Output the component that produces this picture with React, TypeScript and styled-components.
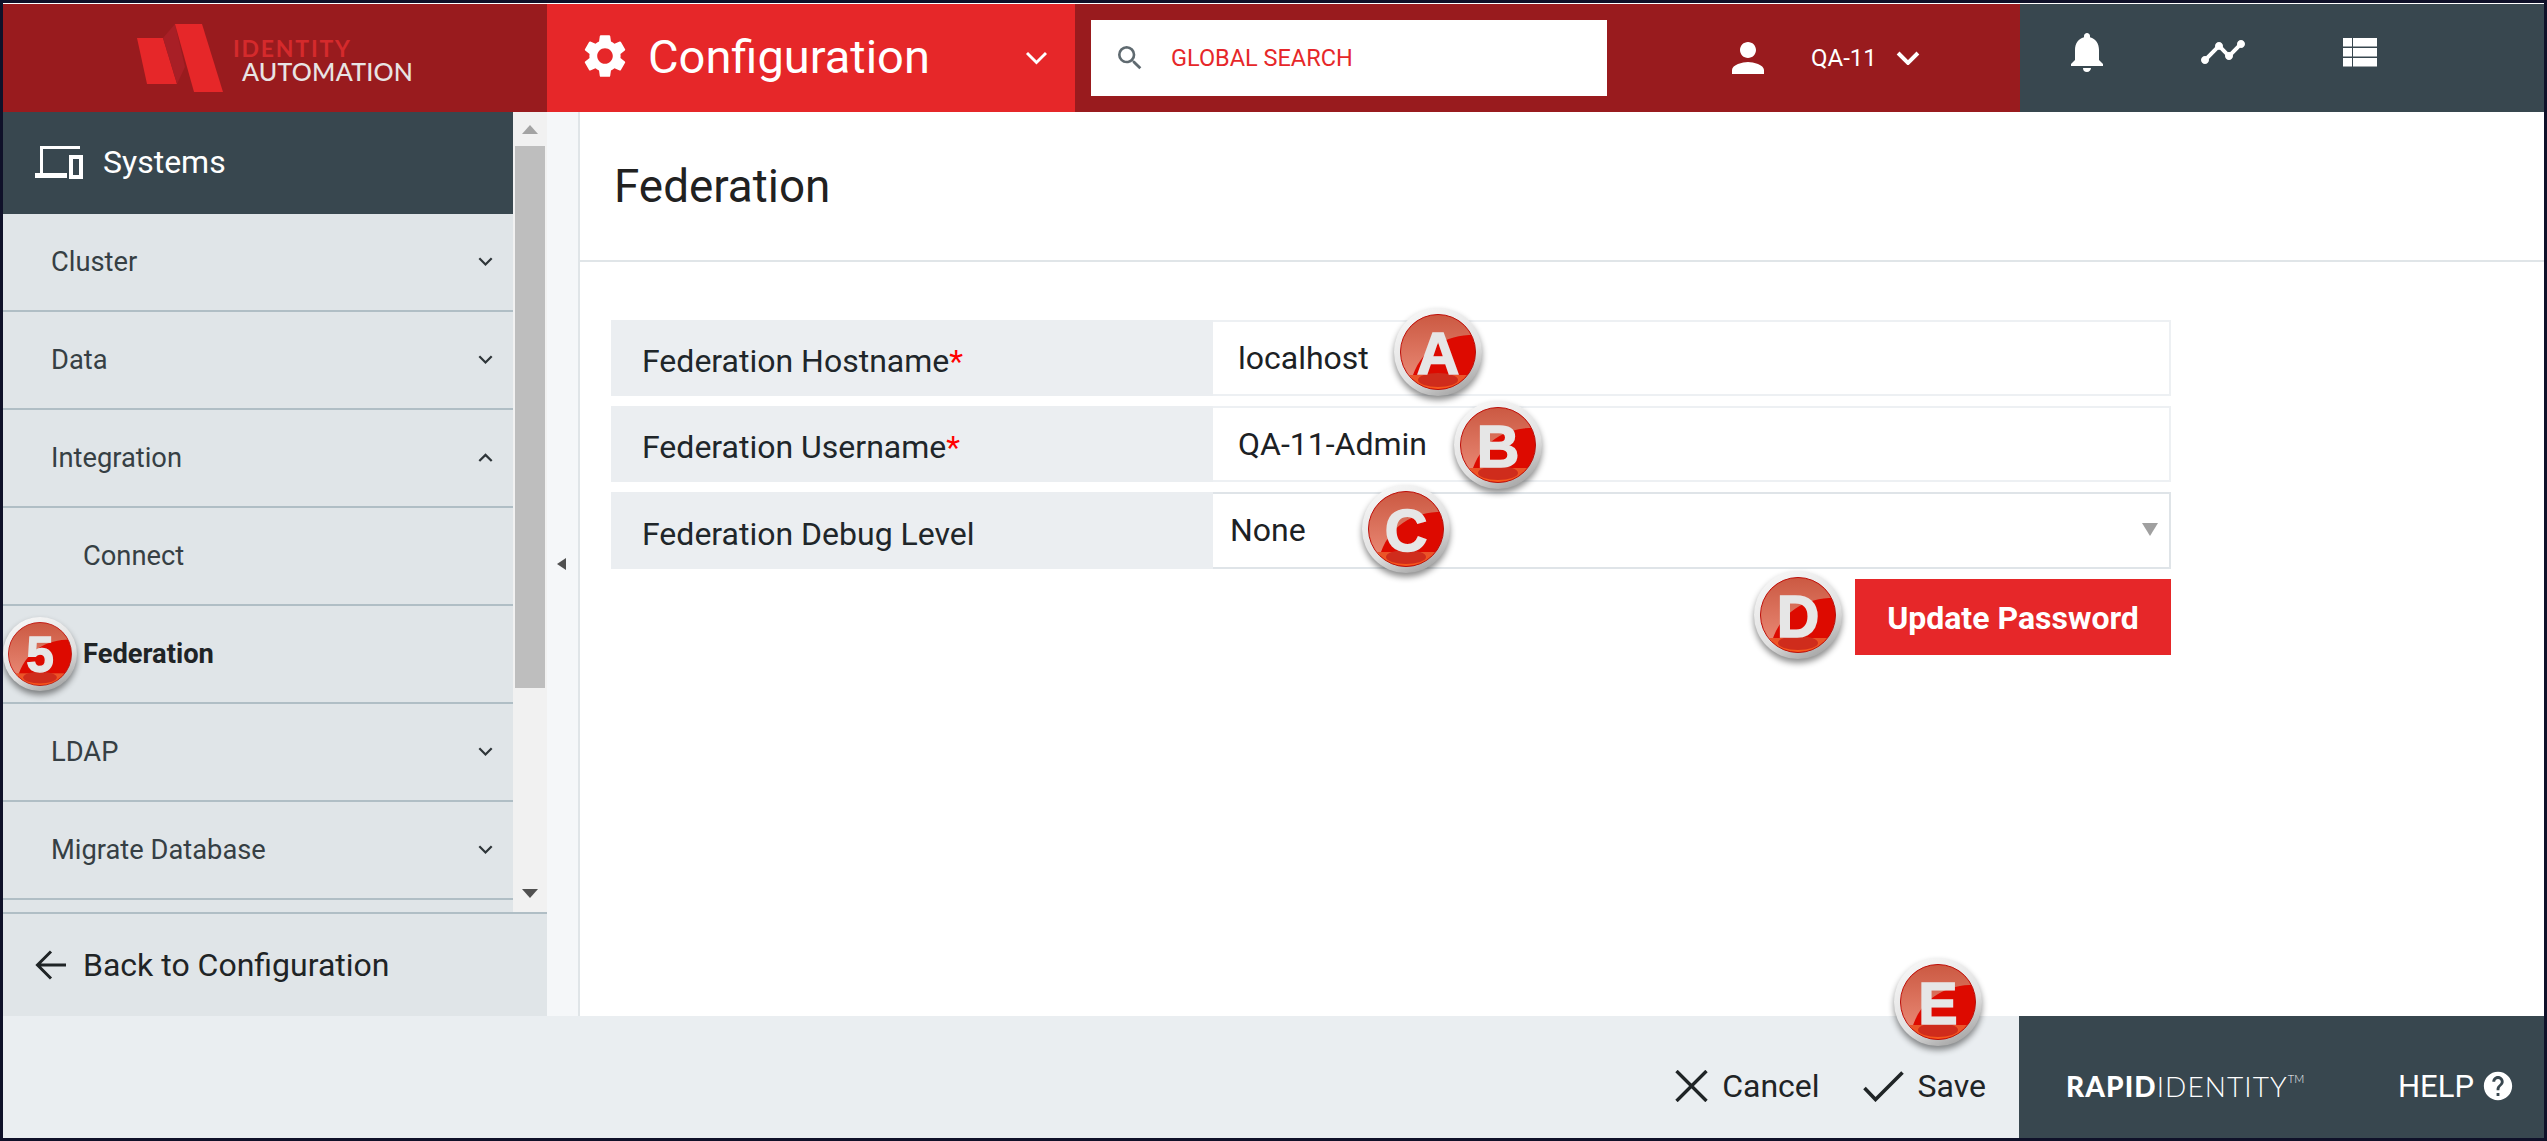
import React from "react";
import styled, { createGlobalStyle } from "styled-components";
import { MdHelp, MdNotifications, MdPerson, MdSearch, MdSettings, MdTimeline } from "react-icons/md";

const red = "#e62729";
const darkRed = "#991b1e";
const slate = "#38474f";

const GlobalStyle = createGlobalStyle`
	html, body {
		margin: 0;
		padding: 0;
		background: #fff;
		font-family: Roboto, "Liberation Sans", sans-serif;
	}
`;

const Frame = styled.div`
	position: relative;
	box-sizing: border-box;
	width: 2547px;
	height: 1141px;
	padding-top: 1px;
	border: 3px solid #0f1129;
	background: #fff;
	display: flex;
	flex-direction: column;
	overflow: hidden;
`;

const Header = styled.header`
	display: flex;
	flex: 0 0 108px;
	background: ${darkRed};
`;

const LogoCell = styled.div`
	flex: 0 0 544px;
	display: flex;
	align-items: flex-start;
	padding: 16px 0 0 134px;
	box-sizing: border-box;
`;

const ConfigCell = styled.div`
	flex: 0 0 528px;
	box-sizing: border-box;
	background: ${red};
	color: #fff;
	display: flex;
	align-items: center;
	padding: 0 27px 0 32px;
	font-size: 47px;
	svg.gear { margin-right: 17px; margin-top: -4px; }
`;

const ConfigLabel = styled.span`
	flex: 1;
	margin-top: -3px;
`;

const SearchBox = styled.div`
	flex: 0 0 516px;
	height: 76px;
	margin: 16px 0 0 16px;
	background: #fff;
	display: flex;
	align-items: center;
	padding-left: 23px;
	box-sizing: border-box;
	color: ${red};
	font-size: 23.5px;
	svg { color: #5f6a70; margin-right: 25px; }
`;

const UserBlock = styled.div`
	flex: 1;
	display: flex;
	align-items: center;
	color: #fff;
	font-size: 24px;
	padding: 0 0 0 117px;
	box-sizing: border-box;
`;

const UserName = styled.span`
	margin: 0 19px 0 39px;
`;

const ToolCell = styled.div`
	flex: 0 0 524px;
	box-sizing: border-box;
	background: ${slate};
	color: #fff;
	display: flex;
	align-items: flex-start;
	padding: 23px 0 0 43px;
`;

const ToolSlot = styled.div<{ $width: number }>`
	flex: 0 0 ${(p) => p.$width}px;
	display: flex;
	height: 50px;
	align-items: center;
`;

const Body = styled.div`
	flex: 1;
	display: flex;
	min-height: 0;
`;

const Sidebar = styled.aside`
	flex: 0 0 544px;
	display: flex;
	flex-direction: column;
`;

const SideTop = styled.div`
	flex: 0 0 800px;
	display: flex;
	min-height: 0;
`;

const SidePane = styled.div`
	flex: 0 0 510px;
	display: flex;
	flex-direction: column;
	background: #e0e5e8;
`;

const SideHead = styled.div`
	flex: 0 0 102px;
	background: ${slate};
	color: #fff;
	display: flex;
	align-items: center;
	padding: 0 0 2px 32px;
	box-sizing: border-box;
	font-size: 32px;
	svg { margin-right: 20px; }
`;

const NavRow = styled.div<{ $sub?: boolean; $active?: boolean }>`
	box-sizing: border-box;
	height: 98px;
	flex: 0 0 98px;
	border-bottom: 2px solid #b0bec5;
	display: flex;
	align-items: center;
	justify-content: space-between;
	padding: 0 20px 0 ${(p) => (p.$sub ? 80 : 48)}px;
	font-size: 27.3px;
	font-weight: ${(p) => (p.$active ? 700 : 400)};
	color: ${(p) => (p.$active ? "#1f2426" : "#363f44")};
`;

const Scrollbar = styled.div`
	flex: 0 0 34px;
	background: #f1f1f1;
	display: flex;
	flex-direction: column;
	align-items: center;
`;

const ScrollButton = styled.div<{ $down?: boolean }>`
	flex: 0 0 ${(p) => (p.$down ? "auto" : "34px")};
	margin-top: ${(p) => (p.$down ? "auto" : "0")};
	padding-bottom: ${(p) => (p.$down ? "14px" : "0")};
	display: flex;
	align-items: center;
	&::before {
		content: "";
		border-left: 8px solid transparent;
		border-right: 8px solid transparent;
		${(p) => (p.$down ? "border-top: 9px solid #505050;" : "border-bottom: 9px solid #a3a3a3;")}
	}
`;

const ScrollThumb = styled.div`
	flex: 0 0 542px;
	width: 30px;
	background: #bebebe;
`;

const BackLink = styled.div`
	flex: 1;
	border-top: 2px solid #b0bec5;
	background: #e0e5e8;
	display: flex;
	align-items: center;
	padding-left: 32px;
	font-size: 32px;
	color: #1f2426;
	svg { margin-right: 17px; }
`;

const CollapseStrip = styled.div`
	flex: 0 0 31px;
	background: #f5f7f9;
	border-right: 2px solid #e0e5e8;
	display: flex;
	align-items: center;
	justify-content: center;
	&::before {
		content: "";
		border-top: 6px solid transparent;
		border-bottom: 6px solid transparent;
		border-right: 9px solid #505050;
		margin-left: -2px;
	}
`;

const Content = styled.main`
	flex: 1;
	display: flex;
	flex-direction: column;
`;

const TitleBar = styled.div`
	flex: 0 0 148px;
	border-bottom: 2px solid #e0e5e8;
	display: flex;
	align-items: center;
	padding-left: 34px;
`;

const Title = styled.h1`
	margin: 0;
	font-size: 45.8px;
	font-weight: 400;
	color: #212121;
`;

const Form = styled.div`
	width: 1560px;
	margin: 58px 0 0 31px;
	display: flex;
	flex-direction: column;
	gap: 10px;
`;

const FieldRow = styled.div<{ $tall?: boolean }>`
	display: flex;
	height: ${(p) => (p.$tall ? 77 : 76)}px;
`;

const FieldLabel = styled.div`
	flex: 0 0 602px;
	box-sizing: border-box;
	background: #ebeef1;
	display: flex;
	align-items: center;
	padding: 6px 0 0 31px;
	font-size: 32px;
	color: #20262a;
`;

const Required = styled.span`
	color: #f00;
`;

const FieldValue = styled.div<{ $select?: boolean }>`
	flex: 1;
	box-sizing: border-box;
	background: #fff;
	border: 2px solid ${(p) => (p.$select ? "#dfe4e8" : "#edf0f3")};
	border-left: 0;
	display: flex;
	align-items: center;
	justify-content: space-between;
	padding: 0 11px ${(p) => (p.$select ? 2 : 0)}px ${(p) => (p.$select ? 17 : 25)}px;
	font-size: 32px;
	color: #1c2124;
`;

const SelectArrow = styled.span`
	border-left: 8px solid transparent;
	border-right: 8px solid transparent;
	border-top: 13px solid #a0a0a0;
`;

const ButtonRow = styled.div`
	display: flex;
	justify-content: flex-end;
`;

const RedButton = styled.button`
	width: 316px;
	height: 76px;
	border: 0;
	padding: 2px 0 0;
	background: ${red};
	color: #fff;
	font-family: Roboto, sans-serif;
	font-size: 32px;
	font-weight: 700;
`;

const Footer = styled.footer`
	flex: 0 0 122px;
	display: flex;
`;

const FooterActions = styled.div`
	flex: 1;
	background: #eaeef1;
	display: flex;
	align-items: center;
	justify-content: flex-end;
	padding: 18px 33px 0 0;
	font-size: 32px;
	color: #1f2426;
`;

const FooterAction = styled.div`
	display: flex;
	align-items: center;
	gap: 14px;
	margin-left: 43px;
`;

const Brand = styled.div`
	flex: 0 0 525px;
	box-sizing: border-box;
	background: ${slate};
	color: #fff;
	display: flex;
	align-items: center;
	padding: 18px 0 0 47px;
`;

const BrandMark = styled.div`
	flex: 0 0 332px;
	font-family: Lato, sans-serif;
	font-size: 28px;
	letter-spacing: 1.1px;
	font-weight: 300;
	b { font-weight: 900; }
	sup { font-size: 11px; vertical-align: 14px; line-height: 0; letter-spacing: 0; }
`;

const HelpLabel = styled.div`
	font-size: 31px;
	display: flex;
	align-items: center;
	gap: 7px;
`;

const BadgeWrap = styled.svg<{ $cx: number; $cy: number; $size: number }>`
	position: absolute;
	left: ${(p) => p.$cx - 3 - p.$size / 2}px;
	top: ${(p) => p.$cy - 3 - p.$size / 2}px;
	width: ${(p) => p.$size}px;
	height: ${(p) => p.$size}px;
	overflow: visible;
	filter: drop-shadow(0 4px 3px rgba(0, 0, 0, 0.45));
`;

const Chevron: React.FC<{ size: number; up?: boolean; stroke?: number; color?: string }> = ({ size, up, stroke = 3, color = "#fff" }) => (
	<svg width={size} height={size * 0.62} viewBox="0 0 24 15" fill="none" stroke={color} strokeWidth={stroke}>
		<path d={up ? "M2 13L12 3l10 10" : "M2 2l10 10L22 2"} />
	</svg>
);

const Logo = () => (
	<svg width="290" height="80" viewBox="0 0 290 80">
		<polygon points="0,18 26,18 40,64 10,64" fill="#e62729" />
		<polygon points="26,18 38,4 48,47 40,64" fill="#a81f26" />
		<polygon points="38,4 65,4 86,72 57,72" fill="#e62729" />
		<text x="96" y="37" fontFamily="Lato, sans-serif" fontWeight="700" fontSize="23" fill="#d52a2c" textLength="117">IDENTITY</text>
		<text x="105" y="61" fontFamily="Lato, sans-serif" fontWeight="500" fontSize="25" fill="#e8e4e4" textLength="171">AUTOMATION</text>
	</svg>
);

const DevicesIcon = () => (
	<svg width="48" height="33" viewBox="0 0 48 33" fill="#fff">
		<path d="M5 0h40v3H8v24h24v5H0v-5h5z" />
		<path fillRule="evenodd" d="M34 9h14v24H34zM38 13v16h6V13z" />
	</svg>
);

const ListIcon = () => (
	<svg width="34" height="29" viewBox="0 0 34 29" fill="#fff">
		<rect x="0" y="0" width="9" height="8.5" />
		<rect x="10" y="0" width="24" height="8.5" />
		<rect x="0" y="10" width="9" height="8.5" />
		<rect x="10" y="10" width="24" height="8.5" />
		<rect x="0" y="20" width="9" height="8.5" />
		<rect x="10" y="20" width="24" height="8.5" />
	</svg>
);

const BackArrow = () => (
	<svg width="31" height="30" viewBox="0 0 31 30" fill="none" stroke="#1f2426" strokeWidth="3">
		<path d="M31 15H3M16 1.5L2.5 15 16 28.5" />
	</svg>
);

const CloseIcon = () => (
	<svg width="33" height="32" viewBox="0 0 33 32" fill="none" stroke="#1f2426" strokeWidth="3.4">
		<path d="M1.5 1l30 30M31.5 1l-30 30" />
	</svg>
);

const CheckIcon = () => (
	<svg width="41" height="31" viewBox="0 0 41 31" fill="none" stroke="#1f2426" strokeWidth="3.6">
		<path d="M1.5 17l11 11.5L39.5 1.5" />
	</svg>
);

const Badge: React.FC<{ letter: string; cx: number; cy: number; size?: number }> = ({ letter, cx, cy, size = 100 }) => {
	const id = `badge-${letter}`;
	return (
		<BadgeWrap $cx={cx} $cy={cy} $size={size} viewBox="0 0 100 100">
			<defs>
				<linearGradient id={`${id}-ring`} x1="0.2" y1="0" x2="0.7" y2="1">
					<stop offset="0" stopColor="#f7f7f7" />
					<stop offset="0.65" stopColor="#e0e0e0" />
					<stop offset="1" stopColor="#a4a4a4" />
				</linearGradient>
				<linearGradient id={`${id}-shine`} x1="0" y1="0" x2="0" y2="1">
					<stop offset="0" stopColor="#c9563f" />
					<stop offset="1" stopColor="#ea8a76" />
				</linearGradient>
				<linearGradient id={`${id}-glow`} x1="0" y1="0" x2="0" y2="1">
					<stop offset="0" stopColor="#e8532a" />
					<stop offset="1" stopColor="#ff5a14" />
				</linearGradient>
				<clipPath id={`${id}-clip`}>
					<circle cx="50" cy="50" r="37" />
				</clipPath>
			</defs>
			<circle cx="50" cy="50" r="44" fill={`url(#${id}-ring)`} />
			<circle cx="50" cy="50" r="37.5" fill="#dd0a00" stroke="#b8100a" strokeWidth="1" />
			<g clipPath={`url(#${id}-clip)`}>
				<path d="M8 8H92V33C62 31 32 44 23 80H8Z" fill={`url(#${id}-shine)`} />
				<rect x="8" y="73" width="84" height="20" fill={`url(#${id}-glow)`} />
				<ellipse cx="50" cy="78" rx="20" ry="7" fill="#cf2c1c" />
			</g>
			<text x="50" y="72" textAnchor="middle" fontFamily="'Liberation Sans', sans-serif" fontWeight="700" fontSize="59" fill="#e6e6e6" stroke="#e6e6e6" strokeWidth="1.6">{letter}</text>
		</BadgeWrap>
	);
};

const navItems = [
	{ label: "Cluster", arrow: "down" },
	{ label: "Data", arrow: "down" },
	{ label: "Integration", arrow: "up" },
	{ label: "Connect", sub: true },
	{ label: "Federation", sub: true, active: true },
	{ label: "LDAP", arrow: "down" },
	{ label: "Migrate Database", arrow: "down" },
];

export default function App() {
	return (
		<Frame>
			<GlobalStyle />
			<Header>
				<LogoCell><Logo /></LogoCell>
				<ConfigCell>
					<MdSettings className="gear" size={52} />
					<ConfigLabel>Configuration</ConfigLabel>
					<Chevron size={23} />
				</ConfigCell>
				<SearchBox>
					<MdSearch size={32} />
					GLOBAL SEARCH
				</SearchBox>
				<UserBlock>
					<MdPerson size={48} />
					<UserName>QA-11</UserName>
					<Chevron size={24} stroke={4} />
				</UserBlock>
				<ToolCell>
					<ToolSlot $width={136}><MdNotifications size={48} /></ToolSlot>
					<ToolSlot $width={144}><MdTimeline size={48} /></ToolSlot>
					<ToolSlot $width={60}><ListIcon /></ToolSlot>
				</ToolCell>
			</Header>
			<Body>
				<Sidebar>
					<SideTop>
						<SidePane>
							<SideHead><DevicesIcon />Systems</SideHead>
							{navItems.map((item) => (
								<NavRow key={item.label} $sub={item.sub} $active={item.active}>
									{item.label}
									{item.arrow && <Chevron size={15} up={item.arrow === "up"} stroke={3.6} color="#2e3539" />}
								</NavRow>
							))}
						</SidePane>
						<Scrollbar>
							<ScrollButton />
							<ScrollThumb />
							<ScrollButton $down />
						</Scrollbar>
					</SideTop>
					<BackLink><BackArrow />Back to Configuration</BackLink>
				</Sidebar>
				<CollapseStrip />
				<Content>
					<TitleBar><Title>Federation</Title></TitleBar>
					<Form>
						<FieldRow>
							<FieldLabel>Federation Hostname<Required>*</Required></FieldLabel>
							<FieldValue>localhost</FieldValue>
						</FieldRow>
						<FieldRow>
							<FieldLabel>Federation Username<Required>*</Required></FieldLabel>
							<FieldValue>QA-11-Admin</FieldValue>
						</FieldRow>
						<FieldRow $tall>
							<FieldLabel>Federation Debug Level</FieldLabel>
							<FieldValue $select>None<SelectArrow /></FieldValue>
						</FieldRow>
						<ButtonRow><RedButton>Update Password</RedButton></ButtonRow>
					</Form>
				</Content>
			</Body>
			<Footer>
				<FooterActions>
					<FooterAction><CloseIcon />Cancel</FooterAction>
					<FooterAction><CheckIcon />Save</FooterAction>
				</FooterActions>
				<Brand>
					<BrandMark><b>RAPID</b>IDENTITY<sup>TM</sup></BrandMark>
					<HelpLabel>HELP<MdHelp size={34} /></HelpLabel>
				</Brand>
			</Footer>
			<Badge letter="A" cx={1438} cy={352} />
			<Badge letter="B" cx={1498} cy={445} />
			<Badge letter="C" cx={1406} cy={529} />
			<Badge letter="D" cx={1798} cy={615} />
			<Badge letter="E" cx={1938} cy={1002} />
			<Badge letter="5" cx={40} cy={654} size={84} />
		</Frame>
	);
}
